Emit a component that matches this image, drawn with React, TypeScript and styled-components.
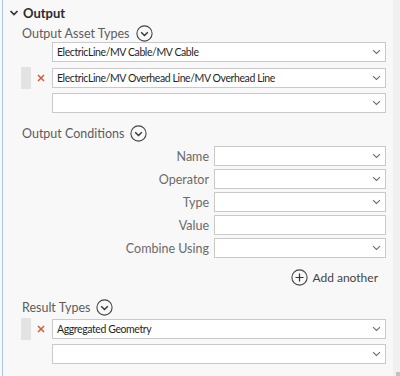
import styled, { createGlobalStyle } from 'styled-components';

const GlobalStyle = createGlobalStyle`
  body {
    margin: 0;
    background: #f8f8f8;
    font-family: Lato, 'Noto Sans', sans-serif;
  }
`;

const Page = styled.div`
  width: 400px;
  height: 376px;
  display: flex;
  background: #f8f8f8;
  overflow: hidden;
`;

const Content = styled.div`
  flex: 1;
  margin-left: 2px;
  border-left: 1px solid #a9c8e8;
  padding-top: 4px;
`;

const ScrollTrack = styled.div`
  width: 7px;
  background: #f0f0f0;
  display: flex;
  flex-direction: column;
  justify-content: flex-end;
`;

const ScrollThumb = styled.div`
  height: 4px;
  margin-left: 3px;
  background: #c2c2c2;
`;

const Header = styled.div`
  display: flex;
  align-items: center;
  height: 18px;
  padding-left: 6px;
  gap: 4px;
  font-size: 13px;
  font-weight: 700;
  color: #2b2b2b;
`;

const SectionLabel = styled.div<{ top: number }>`
  display: flex;
  align-items: center;
  gap: 6px;
  height: 18px;
  margin-top: ${(p) => p.top}px;
  padding-left: 19px;
  font-size: 12.5px;
  color: #5c5c5c;
`;

const ListRow = styled.div<{ top: number }>`
  display: grid;
  grid-template-columns: 10px 21px 334px;
  align-items: center;
  margin-top: ${(p) => p.top}px;
  padding-left: 18px;
`;

const Grip = styled.div`
  height: 22px;
  margin: -1px 0;
  background: #e3e3e3;
`;

const Remove = styled.div`
  display: flex;
  justify-content: center;
  padding-right: 2px;
`;

const Field = styled.div`
  height: 20px;
  box-sizing: border-box;
  border: 1px solid #c9c9c9;
  background: #fff;
  display: flex;
  align-items: center;
  justify-content: space-between;
  padding: 0 4px 0 4px;
  font-size: 10.5px;
  letter-spacing: -0.4px;
  color: #1f1f1f;
  white-space: nowrap;
`;

const CondRow = styled.div<{ top: number }>`
  display: grid;
  grid-template-columns: 206px 172px;
  column-gap: 5px;
  align-items: center;
  margin-top: ${(p) => p.top}px;
`;

const CondLabel = styled.div`
  text-align: right;
  font-size: 12.5px;
  color: #6a6a6a;
`;

const AddRow = styled.div`
  display: flex;
  justify-content: flex-end;
  align-items: center;
  gap: 4px;
  margin-top: 10px;
  padding-right: 15px;
  height: 18px;
  font-size: 12px;
  color: #444;
`;

const Chevron = () => (
  <svg width="9" height="6" viewBox="0 0 9 6">
    <path d="M1 1.2 L4.5 4.5 L8 1.2" fill="none" stroke="#6e6e6e" strokeWidth="1.1" />
  </svg>
);

const CircleChevron = () => (
  <svg width="17" height="17" viewBox="0 0 17 17">
    <circle cx="8.5" cy="8.5" r="7.6" fill="none" stroke="#444" strokeWidth="1.1" />
    <path d="M5.2 7.2 L8.5 10.4 L11.8 7.2" fill="none" stroke="#333" strokeWidth="1.4" />
  </svg>
);

const CirclePlus = () => (
  <svg width="17" height="17" viewBox="0 0 17 17">
    <circle cx="8.5" cy="8.5" r="7.6" fill="none" stroke="#444" strokeWidth="1.1" />
    <path d="M8.5 4.5 V12.5 M4.5 8.5 H12.5" fill="none" stroke="#333" strokeWidth="1.2" />
  </svg>
);

const Cross = () => (
  <svg width="8" height="8" viewBox="0 0 8 8">
    <path d="M1 1 L7 7 M7 1 L1 7" stroke="#cf5b3b" strokeWidth="1.5" />
  </svg>
);

const Expander = () => (
  <svg width="10" height="8" viewBox="0 0 10 8">
    <path d="M1.5 2 L5 5.5 L8.5 2" fill="none" stroke="#333" strokeWidth="1.7" />
  </svg>
);

type Item = { text: string; removable?: boolean };

function ListItem({ item, top }: { item: Item; top: number }) {
  return (
    <ListRow top={top}>
      {item.removable ? <Grip /> : <span />}
      {item.removable ? (
        <Remove>
          <Cross />
        </Remove>
      ) : (
        <span />
      )}
      <Field>
        <span>{item.text}</span>
        <Chevron />
      </Field>
    </ListRow>
  );
}

const conditions = [
  { label: 'Name', drop: true },
  { label: 'Operator', drop: true },
  { label: 'Type', drop: true },
  { label: 'Value', drop: false },
  { label: 'Combine Using', drop: true },
];

export default function App() {
  return (
    <>
      <GlobalStyle />
      <Page>
        <Content>
          <Header>
            <Expander />
            Output
          </Header>
          <SectionLabel top={2}>
            Output Asset Types
            <CircleChevron />
          </SectionLabel>
          <ListItem top={0} item={{ text: 'ElectricLine/MV Cable/MV Cable' }} />
          <ListItem top={6} item={{ text: 'ElectricLine/MV Overhead Line/MV Overhead Line', removable: true }} />
          <ListItem top={5} item={{ text: '' }} />

          <SectionLabel top={11}>
            Output Conditions
            <CircleChevron />
          </SectionLabel>
          {conditions.map((c, i) => (
            <CondRow key={c.label} top={i === 0 ? 4 : 3}>
              <CondLabel>{c.label}</CondLabel>
              <Field>{c.drop ? <><span /><Chevron /></> : null}</Field>
            </CondRow>
          ))}
          <AddRow>
            <CirclePlus />
            Add another
          </AddRow>

          <SectionLabel top={12}>
            Result Types
            <CircleChevron />
          </SectionLabel>
          <ListItem top={3} item={{ text: 'Aggregated Geometry', removable: true }} />
          <ListItem top={5} item={{ text: '' }} />
        </Content>
        <ScrollTrack>
          <ScrollThumb />
        </ScrollTrack>
      </Page>
    </>
  );
}
